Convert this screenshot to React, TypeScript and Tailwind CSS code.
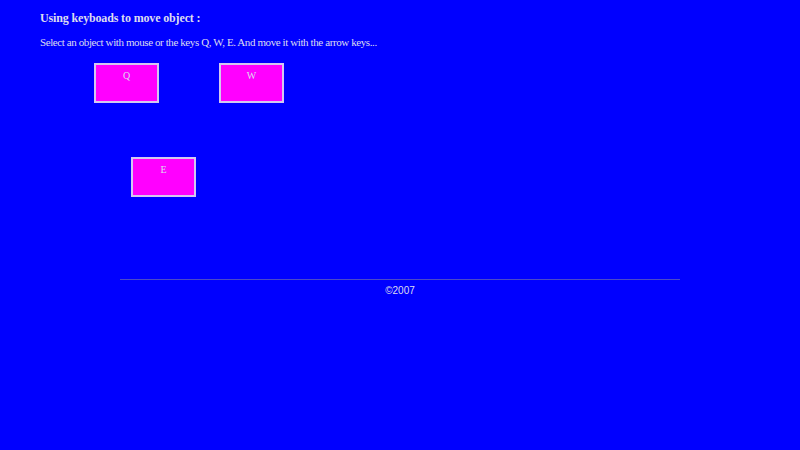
const boxes = [
  { key: 'Q', left: 94, top: 63 },
  { key: 'W', left: 219, top: 63 },
  { key: 'E', left: 131, top: 157 },
];

export default function App() {
  return (
    <div className="min-h-[450px] w-full bg-[#0000ff] text-[#dcdcf0] font-['Liberation_Serif',serif]">
      <div className="px-10 pt-[11px]">
        <h1 className="text-[12px] font-bold leading-[15px] tracking-[-0.15px]">Using keyboads to move object :</h1>
        <p className="mt-[9px] text-[11px] leading-[14px] tracking-[-0.4px]">
          Select an object with mouse or the keys Q, W, E. And move it with the arrow keys...
        </p>
      </div>
      <div className="relative h-[230px]">
        {boxes.map((b) => (
          <div
            key={b.key}
            className="absolute w-[65px] h-[40px] bg-[#ff00ff] border-2 border-[#d4c8f0] text-center text-[10px] leading-[22px]"
            style={{ left: b.left, top: b.top - 49 }}
          >
            {b.key}
          </div>
        ))}
      </div>
      <div className="mx-auto w-[560px] border-t border-[#4a4ac8]" />
      <p className="mt-[4px] text-center text-[10px] leading-[13px] font-['Liberation_Sans',sans-serif]">©2007</p>
    </div>
  );
}
